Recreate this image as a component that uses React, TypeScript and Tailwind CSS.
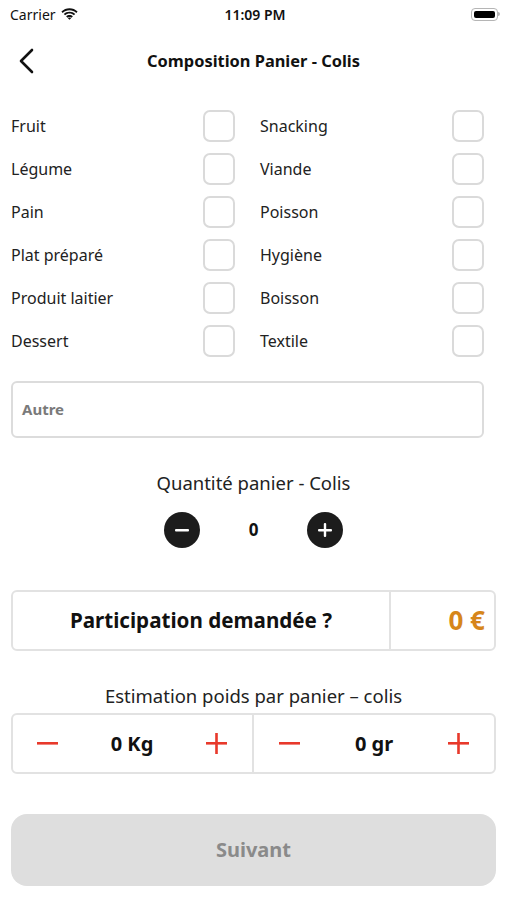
import React, { useState } from "react";

const FONT = { fontFamily: '"Noto Sans", "Open Sans", Arial, sans-serif' };

const LEFT = ["Fruit", "Légume", "Pain", "Plat préparé", "Produit laitier", "Dessert"];
const RIGHT = ["Snacking", "Viande", "Poisson", "Hygiène", "Boisson", "Textile"];

const StatusBar = () => (
  <div className="h-[28px] flex items-center justify-between pl-[10px] pr-[7px] text-[14px] text-[#111]">
    <div className="flex items-center gap-[5px] w-[120px]">
      <span>Carrier</span>
      <svg width="17" height="12" viewBox="0 0 17 12">
        <path d="M8.5 2.2c2.6 0 5 1 6.8 2.7l1.3-1.4C14.4 1.4 11.6.2 8.5.2S2.6 1.4.4 3.5l1.3 1.4C3.5 3.2 5.9 2.2 8.5 2.2z" fill="#111" />
        <path d="M8.5 5.6c1.7 0 3.2.6 4.4 1.7l1.3-1.4C12.7 4.5 10.7 3.7 8.5 3.7S4.3 4.5 2.8 5.9l1.3 1.4c1.2-1.1 2.7-1.7 4.4-1.7z" fill="#111" />
        <path d="M8.5 8.9c.8 0 1.5.3 2 .8l1.4-1.4c-.9-.9-2.1-1.4-3.4-1.4s-2.5.5-3.4 1.4l1.4 1.4c.5-.5 1.2-.8 2-.8zM8.5 11.8l1.6-1.6c-.4-.4-1-.7-1.6-.7s-1.2.3-1.6.7z" fill="#111" />
      </svg>
    </div>
    <span className="font-semibold">11:09 PM</span>
    <div className="w-[120px] flex justify-end">
      <div className="flex items-center">
        <div className="w-[27px] h-[13px] rounded-[4px] border border-[#b5b5b5] p-[2px]">
          <div className="w-full h-full rounded-[2px] bg-black" />
        </div>
        <div className="w-[2px] h-[4px] rounded-r bg-[#b5b5b5]" />
      </div>
    </div>
  </div>
);

const Checkbox = ({ on, onClick }: { on: boolean; onClick: () => void }) => (
  <button
    onClick={onClick}
    className={`w-[32px] h-[32px] rounded-[7px] border-2 border-[#dadada] flex items-center justify-center ${on ? "bg-[#222]" : "bg-white"}`}
  />
);

const Row = ({ label, on, toggle }: { label: string; on: boolean; toggle: () => void }) => (
  <div className="h-[43px] flex items-center justify-between">
    <span className="text-[16px] text-[#222]">{label}</span>
    <Checkbox on={on} onClick={toggle} />
  </div>
);

const RedMinus = () => (
  <svg width="21" height="21" viewBox="0 0 21 21">
    <rect x="0" y="9" width="21" height="2.6" fill="#e8392b" />
  </svg>
);

const RedPlus = () => (
  <svg width="21" height="21" viewBox="0 0 21 21">
    <rect x="0" y="9" width="21" height="2.6" fill="#e8392b" />
    <rect x="9.2" y="0" width="2.6" height="21" fill="#e8392b" />
  </svg>
);

const CircleBtn = ({ plus }: { plus?: boolean }) => (
  <button className="w-[36px] h-[36px] rounded-full bg-[#1c1c1c] flex items-center justify-center">
    <svg width="16" height="16" viewBox="0 0 16 16">
      <rect x="1" y="7" width="14" height="2.4" rx="1" fill="#fff" />
      {plus && <rect x="6.8" y="1" width="2.4" height="14" rx="1" fill="#fff" />}
    </svg>
  </button>
);

export default function App() {
  const [checked, setChecked] = useState<Record<string, boolean>>({});
  const toggle = (k: string) => setChecked((c) => ({ ...c, [k]: !c[k] }));

  return (
    <div className="w-[507px] h-[900px] bg-white overflow-hidden text-[#111]" style={FONT}>
      <StatusBar />

      {/* nav */}
      <div className="h-[66px] flex items-center relative">
        <svg className="absolute left-[18px]" width="18" height="26" viewBox="0 0 18 26">
          <path d="M14 2 L3 13 L14 24" fill="none" stroke="#111" strokeWidth="2.6" strokeLinecap="round" strokeLinejoin="round" />
        </svg>
        <h1 className="w-full text-center text-[16.4px] font-bold">Composition Panier - Colis</h1>
      </div>

      {/* categories */}
      <div className="pl-[11px] pr-[23px] mt-[10px] grid grid-cols-2 gap-x-[25px]">
        <div className="flex flex-col">
          {LEFT.map((l) => (
            <Row key={l} label={l} on={!!checked[l]} toggle={() => toggle(l)} />
          ))}
        </div>
        <div className="flex flex-col">
          {RIGHT.map((l) => (
            <Row key={l} label={l} on={!!checked[l]} toggle={() => toggle(l)} />
          ))}
        </div>
      </div>

      <div className="pl-[11px] pr-[23px] mt-[19px]">
        <div className="h-[57px] rounded-[6px] border-2 border-[#dcdcdc] flex items-center px-[9px]">
          <span className="text-[15px] font-bold text-[#7a7a7a]">Autre</span>
        </div>
      </div>

      {/* quantity */}
      <div className="mt-[33px] text-center text-[18.5px] text-[#222] leading-[24px]">Quantité panier - Colis</div>
      <div className="mt-[17px] flex items-center justify-center">
        <CircleBtn />
        <span className="w-[107px] text-center text-[17px] font-bold">0</span>
        <CircleBtn plus />
      </div>

      {/* participation */}
      <div className="mx-[11px] mt-[42px] h-[61px] rounded-[6px] border-2 border-[#e2e2e2] flex">
        <div className="w-[376px] flex items-center justify-center text-[20.6px] font-bold">Participation demandée ?</div>
        <div className="flex-1 border-l-2 border-[#e2e2e2] flex items-center justify-end pr-[9px] text-[26px] font-bold text-[#d6861a]">
          0 €
        </div>
      </div>

      {/* weight */}
      <div className="mt-[33px] text-center text-[18.5px] text-[#222] leading-[24px]">Estimation poids par panier – colis</div>
      <div className="mx-[11px] mt-[5px] h-[61px] rounded-[6px] border-2 border-[#e2e2e2] flex">
        <div className="flex-1 flex items-center justify-between pl-[24px] pr-[25px]">
          <RedMinus />
          <span className="text-[20px] font-bold">0 Kg</span>
          <RedPlus />
        </div>
        <div className="flex-1 border-l-2 border-[#e2e2e2] flex items-center justify-between pl-[25px] pr-[25px]">
          <RedMinus />
          <span className="text-[20px] font-bold">0 gr</span>
          <RedPlus />
        </div>
      </div>

      <button className="mx-[11px] mt-[40px] w-[485px] h-[72px] rounded-[16px] bg-[#dedede] text-[20px] font-bold text-[#8a8a8a]">
        Suivant
      </button>
    </div>
  );
}
